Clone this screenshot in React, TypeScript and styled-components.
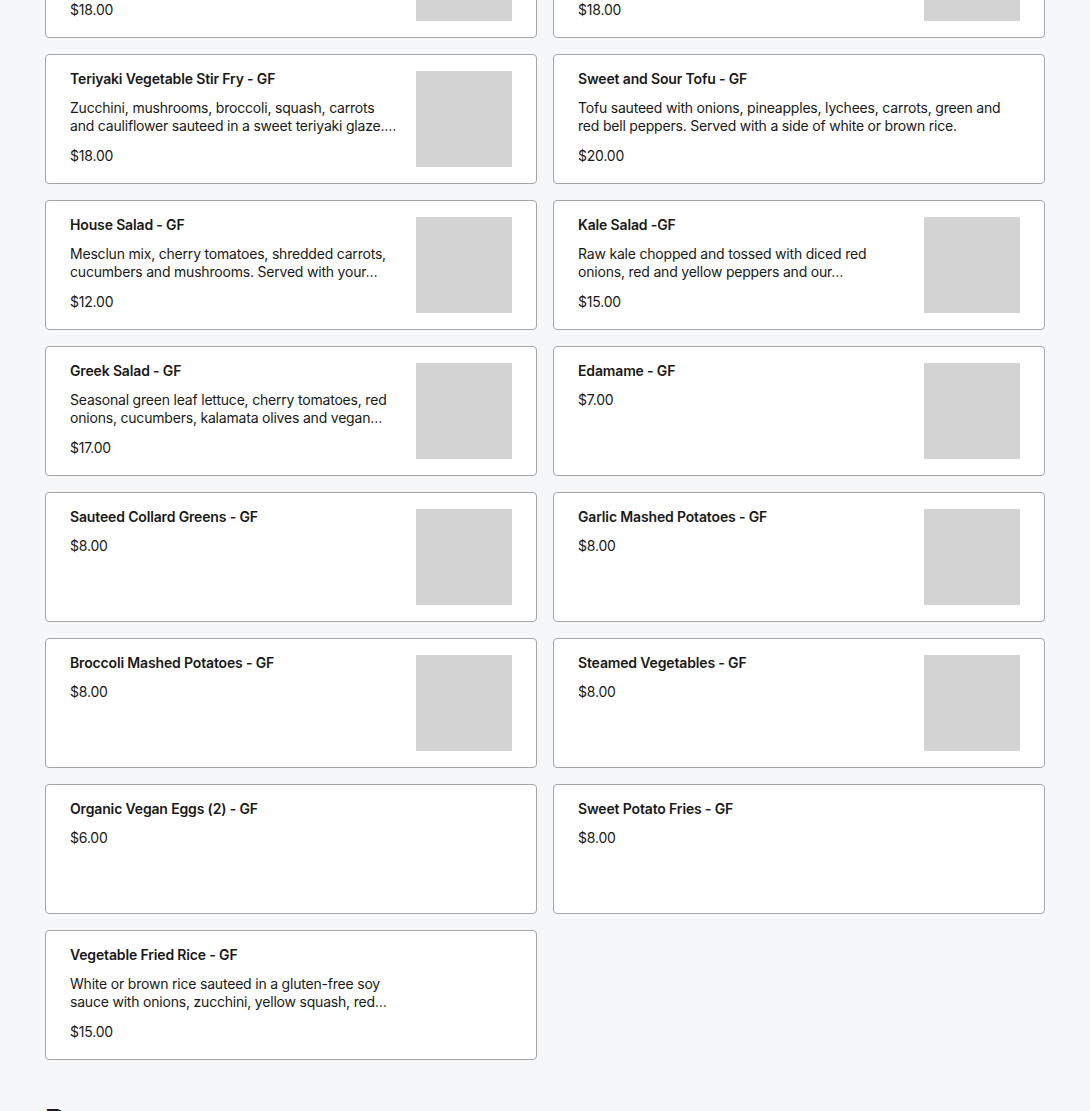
import React from "react";
import styled, { createGlobalStyle } from "styled-components";

const GlobalStyle = createGlobalStyle`
  html, body {
    margin: 0;
    padding: 0;
    background: #f6f7f8;
    font-family: Inter, "Open Sans", sans-serif;
    color: #191919;
    -webkit-font-smoothing: antialiased;
  }
  * { box-sizing: border-box; }
`;

const Page = styled.div`
  padding: 0 45px;
  margin-top: -92px;
  height: 1203px;
  overflow: hidden;
`;

const Grid = styled.div`
  display: grid;
  grid-template-columns: repeat(2, 1fr);
  gap: 16px;
`;

const Card = styled.div`
  display: flex;
  align-items: flex-start;
  min-height: 130px;
  padding: 16px 24px;
  background: #ffffff;
  border: 1px solid #a6a6a6;
  border-radius: 4px;
`;

const Info = styled.div<{ $narrow?: boolean }>`
  flex: 1;
  min-width: 0;
  max-width: ${(p) => (p.$narrow ? "330px" : "none")};
  margin-top: -1px;
  display: flex;
  flex-direction: column;
`;

const Title = styled.div`
  font-size: 14px;
  line-height: 18px;
  font-weight: 600;
  letter-spacing: -0.15px;
  margin-bottom: 11px;
`;

const Desc = styled.div`
  font-size: 14px;
  line-height: 18px;
  font-weight: 400;
  letter-spacing: -0.2px;
  color: #191919;
  display: -webkit-box;
  -webkit-line-clamp: 2;
  -webkit-box-orient: vertical;
  overflow: hidden;
  margin-bottom: 12px;
`;

const Price = styled.div`
  font-size: 14px;
  line-height: 18px;
  font-weight: 400;
  letter-spacing: -0.2px;
`;

const Thumb = styled.div`
  flex: none;
  width: 96px;
  height: 96px;
  margin-left: 16px;
  background: #d3d3d3;
`;

const Heading = styled.h2`
  margin: 40px 0 0;
  font-size: 30px;
  line-height: 40px;
  font-weight: 700;
  letter-spacing: -0.5px;
`;

type Item = {
  name: string;
  desc?: string;
  price: string;
  img?: "gray" | "blank";
};

const items: Item[] = [
  { name: "Vegetable Lo Mein - GF", desc: "Gluten-free noodles tossed with seasonal vegetables in a savory sauce.", price: "$18.00", img: "gray" },
  { name: "General Tso's Tofu - GF", desc: "Crispy tofu in a sweet and spicy sauce with broccoli.", price: "$18.00", img: "gray" },
  { name: "Teriyaki Vegetable Stir Fry - GF", desc: "Zucchini, mushrooms, broccoli, squash, carrots and cauliflower sauteed in a sweet teriyaki glaze.…", price: "$18.00", img: "gray" },
  { name: "Sweet and Sour Tofu - GF", desc: "Tofu sauteed with onions, pineapples, lychees, carrots, green and red bell peppers. Served with a side of white or brown rice.", price: "$20.00" },
  { name: "House Salad - GF", desc: "Mesclun mix, cherry tomatoes, shredded carrots, cucumbers and mushrooms. Served with your…", price: "$12.00", img: "gray" },
  { name: "Kale Salad -GF", desc: "Raw kale chopped and tossed with diced red onions, red and yellow peppers and our…", price: "$15.00", img: "gray" },
  { name: "Greek Salad - GF", desc: "Seasonal green leaf lettuce, cherry tomatoes, red onions, cucumbers, kalamata olives and vegan…", price: "$17.00", img: "gray" },
  { name: "Edamame - GF", price: "$7.00", img: "gray" },
  { name: "Sauteed Collard Greens - GF", price: "$8.00", img: "gray" },
  { name: "Garlic Mashed Potatoes - GF", price: "$8.00", img: "gray" },
  { name: "Broccoli Mashed Potatoes - GF", price: "$8.00", img: "gray" },
  { name: "Steamed Vegetables - GF", price: "$8.00", img: "gray" },
  { name: "Organic Vegan Eggs (2) - GF", price: "$6.00" },
  { name: "Sweet Potato Fries - GF", price: "$8.00" },
  { name: "Vegetable Fried Rice - GF", desc: "White or brown rice sauteed in a gluten-free soy sauce with onions, zucchini, yellow squash, red…", price: "$15.00", img: "blank" },
];

export default function App() {
  return (
    <>
      <GlobalStyle />
      <Page>
        <Grid>
          {items.map((it) => (
            <Card key={it.name}>
              <Info $narrow={it.img === "blank"}>
                <Title>{it.name}</Title>
                {it.desc && <Desc>{it.desc}</Desc>}
                <Price>{it.price}</Price>
              </Info>
              {it.img === "gray" && <Thumb />}
            </Card>
          ))}
        </Grid>
        <Heading>Beverages</Heading>
      </Page>
    </>
  );
}
